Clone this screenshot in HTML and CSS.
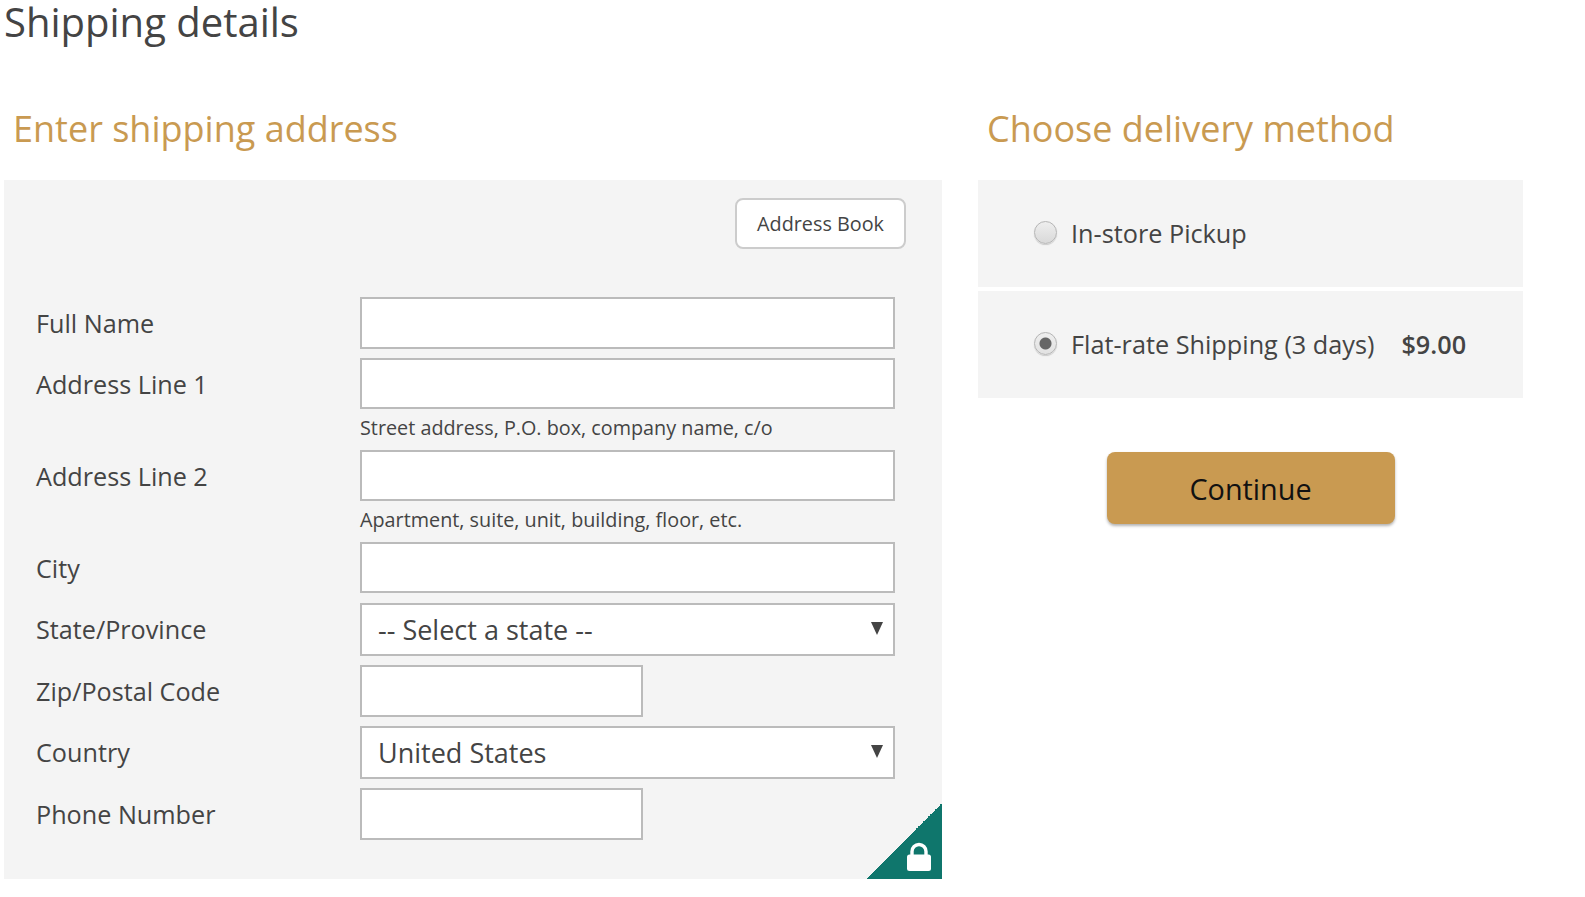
FILE: index.html
```html
<!DOCTYPE html>
<html lang="en">
<head>
  <meta charset="UTF-8" />
  <title>Shipping details</title>
  <link rel="stylesheet" href="styles.css">
</head>
<body>
  <h1 class="page-title">Shipping details</h1>
  <div class="columns">
    <section class="address-col">
      <h2 class="section-title">Enter shipping address</h2>
      <form class="address-panel">
        <div class="book-row">
          <button type="button" class="book-btn">Address Book</button>
        </div>
        <div class="form-grid">
          <label class="field-label" for="name">Full Name</label>
          <div class="field"><input type="text" id="name" class="tall"></div>

          <label class="field-label" for="addr1">Address Line 1</label>
          <div class="field">
            <input type="text" id="addr1">
            <p class="hint">Street address, P.O. box, company name, c/o</p>
          </div>

          <label class="field-label" for="addr2">Address Line 2</label>
          <div class="field">
            <input type="text" id="addr2">
            <p class="hint">Apartment, suite, unit, building, floor, etc.</p>
          </div>

          <label class="field-label" for="city">City</label>
          <div class="field"><input type="text" id="city"></div>

          <label class="field-label" for="state">State/Province</label>
          <div class="field select-wrap">
            <select id="state">
              <option>-- Select a state --</option>
            </select>
          </div>

          <label class="field-label" for="zip">Zip/Postal Code</label>
          <div class="field"><input type="text" id="zip" class="short tall"></div>

          <label class="field-label" for="country">Country</label>
          <div class="field select-wrap">
            <select id="country">
              <option>United States</option>
            </select>
          </div>

          <label class="field-label" for="phone">Phone Number</label>
          <div class="field"><input type="text" id="phone" class="short tall"></div>
        </div>
        <div class="secure-badge">
          <svg class="lock-icon" width="26" height="30" viewBox="0 0 26 30">
            <path d="M6 14V9.5a7 7 0 0 1 14 0V14" fill="none" stroke="#fff" stroke-width="3.4"/>
            <rect x="1" y="12.5" width="24" height="16.5" rx="2.5" fill="#fff"/>
          </svg>
        </div>
      </form>
    </section>

    <section class="delivery-col">
      <h2 class="section-title">Choose delivery method</h2>
      <label class="method">
        <input type="radio" name="method">
        <span>In-store Pickup</span>
      </label>
      <label class="method">
        <input type="radio" name="method" checked>
        <span>Flat-rate Shipping (3 days)</span>
        <strong class="price">$9.00</strong>
      </label>
      <div class="continue-row">
        <button type="button" class="continue-btn">Continue</button>
      </div>
    </section>
  </div>
</body>
</html>
```

FILE: styles.css
```css
html, body {
  height: 100%;
}
body {
  margin: 0;
  padding-left: 4px;
  font-family: "Open Sans", sans-serif;
  color: #444;
  background-color: #fff;
  overflow: hidden;
}
.page-title {
  margin: 0;
  font-size: 40px;
  font-weight: 400;
  line-height: 44px;
  color: #444;
}
.columns {
  display: flex;
  gap: 36px;
  margin-top: 38px;
}
.address-col {
  width: 938px;
}
.delivery-col {
  width: 545px;
}
.section-title {
  margin: 0;
  height: 98px;
  padding-left: 9px;
  font-size: 36px;
  font-weight: 400;
  line-height: 94px;
  color: #c99a51;
}
.delivery-col .section-title {
  padding-left: 9px;
}
.address-panel {
  position: relative;
  height: 699px;
  box-sizing: border-box;
  padding: 18px 36px 0 32px;
  background-color: #f4f4f4;
}
.book-row {
  display: flex;
  justify-content: flex-end;
}
.book-btn {
  width: 171px;
  height: 51px;
  padding: 0;
  border: 2px solid #ccc;
  border-radius: 8px;
  background-color: #fff;
  font-family: inherit;
  font-size: 19.8px;
  color: #444;
}
.form-grid {
  display: grid;
  grid-template-columns: 324px 535px;
  row-gap: 9px;
  margin-top: 48px;
}
.field-label {
  font-size: 25.2px;
  line-height: 52px;
}
.field {
  display: flex;
  flex-direction: column;
}
input[type="text"],
select {
  box-sizing: border-box;
  width: 535px;
  height: 51px;
  margin: 0;
  padding: 0 16px;
  border: 2px solid #bbb;
  border-radius: 0;
  background-color: #fff;
  font-family: inherit;
  font-size: 27px;
  color: #444;
}
select {
  appearance: none;
  height: 53px;
}
input.tall {
  height: 52px;
}
input.short {
  width: 283px;
}
.select-wrap {
  position: relative;
}
.select-wrap::after {
  content: "";
  position: absolute;
  top: 19px;
  right: 12px;
  border-left: 6px solid transparent;
  border-right: 6px solid transparent;
  border-top: 13px solid #444;
  pointer-events: none;
}
.hint {
  margin: 0;
  height: 32px;
  font-size: 19.8px;
  line-height: 37px;
}
.secure-badge {
  position: absolute;
  right: 0;
  bottom: 0;
  width: 76px;
  height: 76px;
  background: linear-gradient(to bottom right, transparent 50%, #0f766c 50%);
}
.lock-icon {
  position: absolute;
  right: 10px;
  bottom: 7px;
}
.method {
  display: flex;
  align-items: center;
  height: 107px;
  box-sizing: border-box;
  margin-bottom: 4px;
  padding: 0 0 1px 56px;
  background-color: #f4f4f4;
  font-size: 25.25px;
}
.method input {
  appearance: none;
  flex: none;
  width: 23px;
  height: 23px;
  margin: 0 14px 0 0;
  position: relative;
  top: -1px;
  border: 1px solid #b5b5b5;
  border-radius: 50%;
  background: linear-gradient(to bottom, #eee, #d9d9d9);
  box-shadow: 0 1px 1px #ccc;
}
.method input:checked {
  background: radial-gradient(circle, #666 0, #666 5.5px, transparent 6.5px), linear-gradient(to bottom, #eee, #e2e2e2);
}
.price {
  margin-left: 27px;
  font-weight: 600;
}
.continue-row {
  display: flex;
  justify-content: center;
  margin-top: 54px;
}
.continue-btn {
  width: 288px;
  height: 72px;
  padding: 0;
  border: 0;
  border-radius: 8px;
  background-color: #c99a51;
  box-shadow: 0 2px 3px rgba(0, 0, 0, 0.3);
  font-family: inherit;
  font-size: 28.8px;
  color: #111;
}
```
